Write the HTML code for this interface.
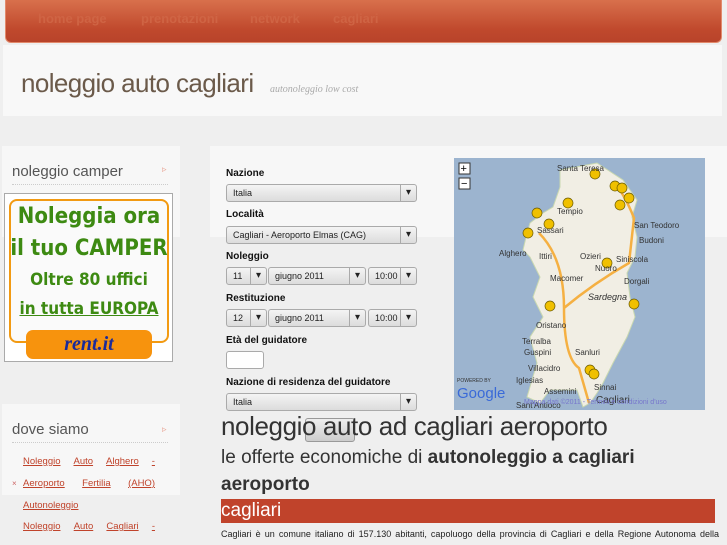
<!DOCTYPE html>
<html><head><meta charset="utf-8"><style>
*{margin:0;padding:0;box-sizing:border-box}
body{width:727px;height:545px;overflow:hidden;background:#efefef;font-family:"Liberation Sans",sans-serif;position:relative}
.a{position:absolute}
.nav{left:5px;top:0;width:717px;height:43px;background:linear-gradient(#d8704c,#c0492d 70%,#b8432a);border-radius:0 0 6px 6px;border:1px solid #e28a6c;border-top:none}
.nav span{position:absolute;top:11px;font-size:13px;color:#cf6444;font-weight:bold}
.hdr{left:3px;top:45px;width:719px;height:71px;background:#f8f8f8}
.box{background:#f7f7f7}
.lbl{font-size:10px;font-weight:bold;color:#111;left:226px}
.sel{height:18px;border:1px solid #aaa;border-radius:3px;background:linear-gradient(#f4f4f4,#dcdcdc);font-size:9px;color:#222;line-height:16px;padding-left:6px}
.sel:after{content:"▾";position:absolute;right:0;top:0;width:15px;height:16px;border-left:1px solid #aaa;text-align:center;font-size:10px}
.lk{left:23px;font-size:9.5px;color:#c0432b;text-decoration:underline;width:132px;display:flex;justify-content:space-between}
</style></head><body>
<div class="a nav"><span style="left:32px">home page</span><span style="left:135px">prenotazioni</span><span style="left:244px">network</span><span style="left:327px">cagliari</span></div>
<div class="a hdr"></div>
<div class="a" style="left:21px;top:68px;font-size:26px;color:#6b5a4a;letter-spacing:-0.6px">noleggio auto cagliari</div>
<div class="a" style="left:270px;top:84px;font-size:10px;font-style:italic;color:#aaa;font-family:'Liberation Serif',serif">autonoleggio low cost</div>

<div class="a box" style="left:2px;top:146px;width:178px;height:91px"></div>
<div class="a" style="left:12px;top:163px;font-size:15px;color:#555">noleggio camper</div>
<div class="a" style="left:162px;top:164px;font-size:9px;color:#e8a090">▹</div>
<div class="a" style="left:12px;top:184px;width:156px;border-top:1px dotted #ccc"></div>
<div class="a" style="left:4px;top:193px;width:169px;height:169px;background:#fff;border:1px solid #aaa"></div>
<div class="a" style="left:9px;top:199px;width:160px;height:144px;border:2px solid #f29a12;border-radius:8px;background:#fafafa"></div>
<div class="a" style="left:8px;top:201px;width:162px;text-align:center;color:#3d8a12;font-weight:bold;font-family:'DejaVu Sans Condensed','DejaVu Sans',sans-serif">
<div style="font-size:22px;line-height:32px">Noleggia ora</div><div style="font-size:22px;line-height:32px">il tuo CAMPER</div><div style="font-size:17px;line-height:31px">Oltre 80 uffici</div><div style="font-size:17px;line-height:26px;text-decoration:underline">in tutta EUROPA</div></div>
<div class="a" style="left:26px;top:330px;width:126px;height:29px;background:#f7930d;border-radius:7px;text-align:center;font:italic bold 20px 'Liberation Serif',serif;color:#1a2a9a;line-height:28px">rent.it</div>

<div class="a box" style="left:2px;top:404px;width:178px;height:91px"></div>
<div class="a" style="left:12px;top:421px;font-size:15px;color:#555">dove siamo</div>
<div class="a" style="left:162px;top:424px;font-size:9px;color:#e8a090">▹</div>
<div class="a" style="left:12px;top:442px;width:156px;border-top:1px dotted #ccc"></div>
<div class="a lk" style="top:456px"><span>Noleggio</span><span>Auto</span><span>Alghero</span><span>-</span></div>
<div class="a" style="left:12px;top:479px;font-size:8px;color:#c66">×</div>
<div class="a lk" style="top:478px"><span>Aeroporto</span><span>Fertilia</span><span>(AHO)</span></div>
<div class="a lk" style="top:500px"><span>Autonoleggio</span></div>
<div class="a lk" style="top:521px"><span>Noleggio</span><span>Auto</span><span>Cagliari</span><span>-</span></div>

<div class="a box" style="left:210px;top:146px;width:517px;height:91px"></div>
<div class="a lbl" style="top:168px">Nazione</div>
<div class="a sel" style="left:226px;top:184px;width:191px">Italia</div>
<div class="a lbl" style="top:209px">Località</div>
<div class="a sel" style="left:226px;top:226px;width:191px">Cagliari - Aeroporto Elmas (CAG)</div>
<div class="a lbl" style="top:251px">Noleggio</div>
<div class="a sel" style="left:226px;top:267px;width:41px">11</div>
<div class="a sel" style="left:268px;top:267px;width:98px">giugno 2011</div>
<div class="a sel" style="left:368px;top:267px;width:49px">10:00</div>
<div class="a lbl" style="top:293px">Restituzione</div>
<div class="a sel" style="left:226px;top:309px;width:41px">12</div>
<div class="a sel" style="left:268px;top:309px;width:98px">giugno 2011</div>
<div class="a sel" style="left:368px;top:309px;width:49px">10:00</div>
<div class="a lbl" style="top:335px">Età del guidatore</div>
<div class="a" style="left:226px;top:351px;width:38px;height:18px;background:#fff;border:1px solid #aaa;border-radius:3px"></div>
<div class="a lbl" style="top:377px">Nazione di residenza del guidatore</div>
<div class="a sel" style="left:226px;top:393px;width:191px">Italia</div>

<svg class="a" style="left:454px;top:158px" width="251" height="252" viewBox="0 0 251 252">
<rect width="251" height="252" fill="#9cb4cf"/>
<polygon fill="#f1eee4" stroke="#c9d8b0" points="106,12 143,5 169,22 183,42 178,59 183,79 181,99 173,115 176,139 181,159 173,179 159,205 149,225 143,235 136,245 129,249 123,232 96,232 86,245 73,239 83,205 76,179 89,159 79,139 86,119 76,99 69,92 73,75 76,65 89,55 99,49 106,29"/>
<path d="M85,75 Q110,100 110,150 T125,210 L135,245 M110,150 Q140,125 175,105 L180,60 Q170,35 160,25" fill="none" stroke="#f5b042" stroke-width="2.5"/>
<g fill="#f0c000" stroke="#6a5a00" stroke-width=".7">
<circle cx="141" cy="16" r="5"/><circle cx="161" cy="28" r="5"/><circle cx="168" cy="30" r="5"/><circle cx="175" cy="40" r="5"/><circle cx="166" cy="47" r="5"/><circle cx="114" cy="45" r="5"/><circle cx="83" cy="55" r="5"/><circle cx="95" cy="66" r="5"/><circle cx="74" cy="75" r="5"/><circle cx="153" cy="105" r="5"/><circle cx="96" cy="148" r="5"/><circle cx="180" cy="146" r="5"/><circle cx="136" cy="212" r="5"/><circle cx="140" cy="216" r="5"/></g>
<g font-family="Liberation Sans" font-size="8" fill="#333">
<text x="103" y="13">Santa Teresa</text><text x="103" y="56">Tempio</text><text x="83" y="75">Sassari</text><text x="45" y="98">Alghero</text><text x="85" y="101">Ittiri</text><text x="126" y="101">Ozieri</text><text x="141" y="113">Nuoro</text><text x="180" y="70">San Teodoro</text><text x="185" y="85">Budoni</text><text x="162" y="104">Siniscola</text><text x="170" y="126">Dorgali</text><text x="96" y="123">Macomer</text><text x="134" y="142" font-style="italic" font-size="9">Sardegna</text><text x="82" y="170">Oristano</text><text x="68" y="186">Terralba</text><text x="70" y="197">Guspini</text><text x="121" y="197">Sanluri</text><text x="74" y="213">Villacidro</text><text x="62" y="225">Iglesias</text><text x="90" y="236">Assemini</text><text x="140" y="232">Sinnai</text><text x="142" y="245" font-size="10">Cagliari</text><text x="62" y="250">Sant'Antioco</text><text x="3" y="224" font-size="5">POWERED BY</text><text x="3" y="240" font-size="15" fill="#3a6ad8">Google</text><text x="70" y="246" font-size="7" fill="#77c">Mappa dati ©2011 - Termini e condizioni d'uso</text></g>
<rect x="5" y="5" width="11" height="11" fill="#fff" stroke="#333"/><rect x="5" y="20" width="11" height="11" fill="#fff" stroke="#333"/>
<text x="6.5" y="14" font-size="11" font-family="Liberation Sans">+</text><text x="7" y="29" font-size="11" font-family="Liberation Sans">−</text>
</svg>

<div class="a" style="left:305px;top:418px;width:50px;height:24px;border:1px solid #999;border-radius:3px;background:linear-gradient(#eee,#ccc)"></div>
<div class="a" style="left:221px;top:411px;font-size:26px;color:#333;letter-spacing:-0.4px">noleggio auto ad cagliari aeroporto</div>
<div class="a" style="left:221px;top:447px;font-size:19px;color:#333">le offerte economiche di <b>autonoleggio a cagliari</b></div>
<div class="a" style="left:221px;top:474px;font-size:19px;color:#333;font-weight:bold">aeroporto</div>
<div class="a" style="left:221px;top:499px;width:494px;height:24px;background:#c0432b;color:#fff;font-size:19px;line-height:23px">cagliari</div>
<div class="a" style="left:221px;top:529px;width:494px;font-size:9px;color:#222;text-align:justify;white-space:nowrap;word-spacing:1.6px">Cagliari è un comune italiano di 157.130 abitanti, capoluogo della provincia di Cagliari e della Regione Autonoma della</div>
</body></html>
